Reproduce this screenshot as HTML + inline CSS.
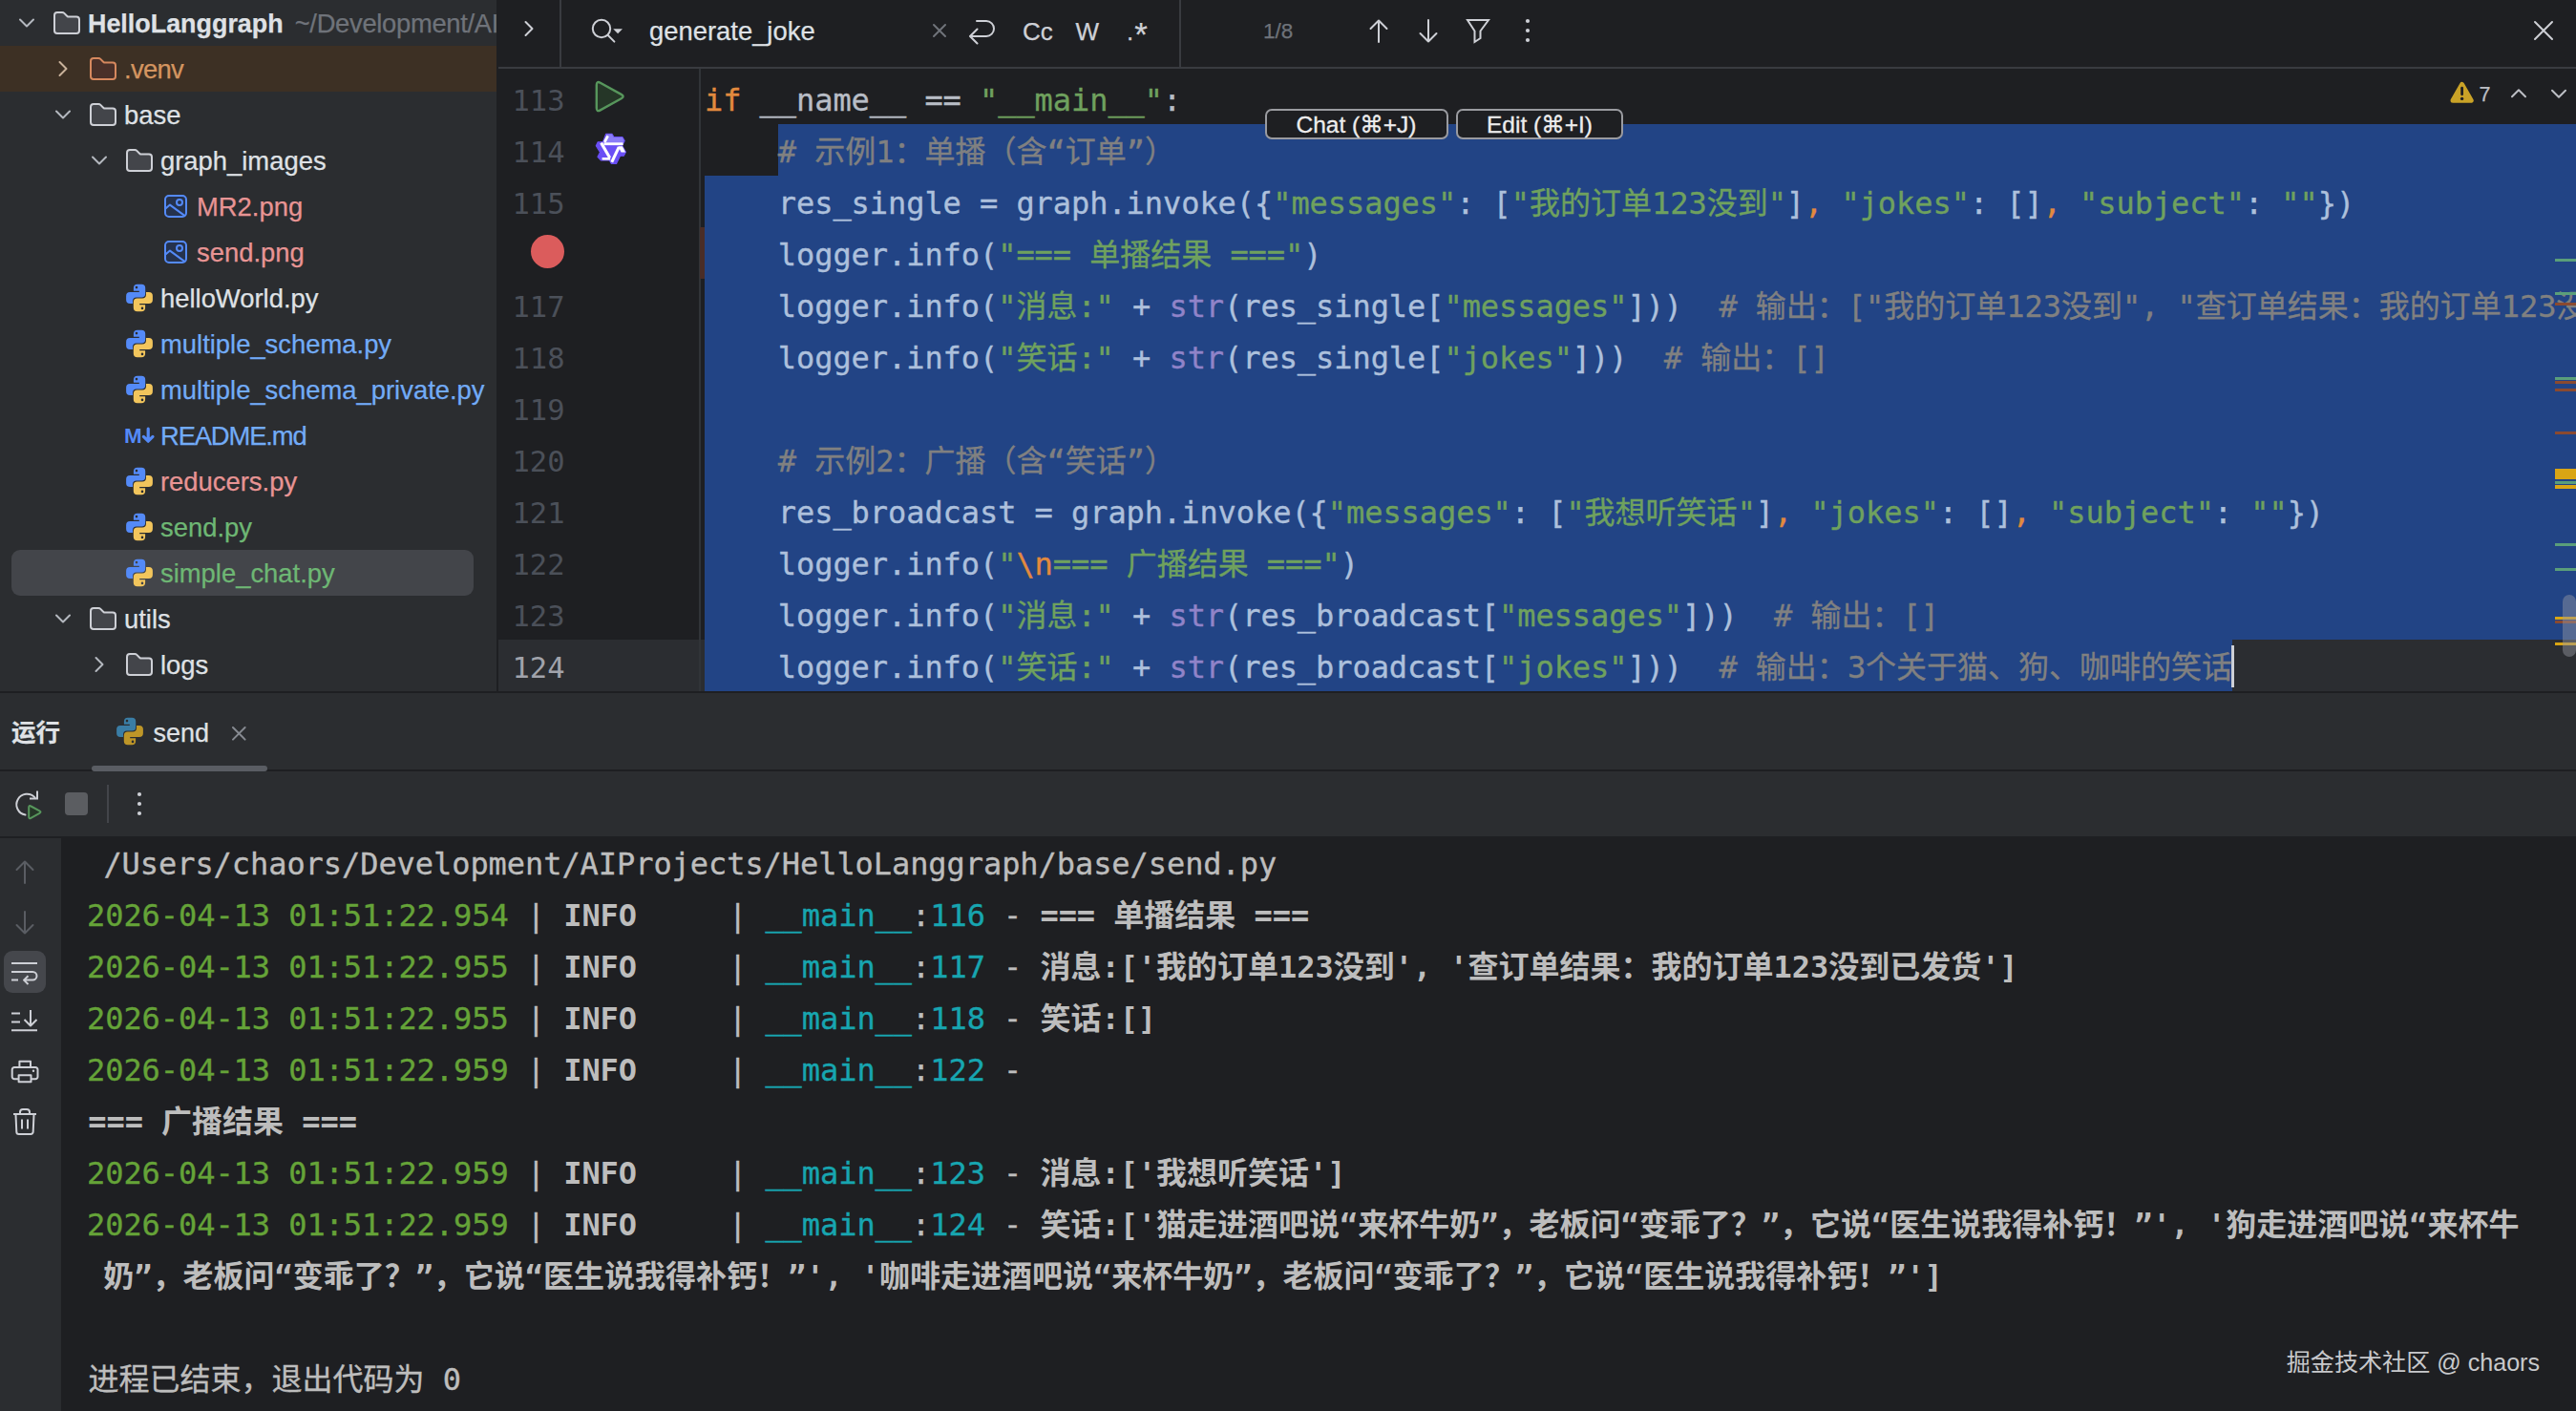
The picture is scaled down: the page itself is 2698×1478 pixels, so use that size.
<!DOCTYPE html>
<html lang="zh-CN"><head><meta charset="utf-8"><title>HelloLanggraph – send.py</title><style>
*{box-sizing:border-box}
html,body{margin:0;padding:0}
body{width:2698px;height:1478px;overflow:hidden;background:#2b2d30;position:relative;font-family:"Liberation Sans","DejaVu Sans","Noto Sans CJK SC",sans-serif;color:#dfe1e5}
.a{position:absolute}
.i{position:absolute;overflow:visible}
.t{position:absolute;white-space:pre;line-height:48px;font-size:27.4px;-webkit-text-stroke:.25px currentColor}
.m{position:absolute;white-space:pre;font-family:"DejaVu Sans Mono","Liberation Mono","Noto Sans CJK SC",monospace;font-size:32px;line-height:54px;color:#b8bdc6;font-variant-ligatures:none;letter-spacing:-0.066px;-webkit-text-stroke:.35px currentColor}
.sel{color:#adc0dc}
.m i{font-style:normal;letter-spacing:0}
.ln{position:absolute;white-space:pre;font-family:"DejaVu Sans Mono","Liberation Mono","Noto Sans CJK SC",monospace;font-size:30.5px;line-height:54px;color:#4b5059;text-align:right;width:90px}
.k{color:#e28a3e}.s{color:#6fa15e}.c{color:#808080}.b{color:#9083c8}
.g{color:#65a338}.cy{color:#17a5b0}.con{color:#bdbdbd}.B{font-weight:bold;-webkit-text-stroke:0}
#sidebar{left:0;top:0;width:520px;height:724px;background:#2b2d30;overflow:hidden}
#editor{left:520px;top:0;width:2178px;height:724px;background:#1e1f22;overflow:hidden}
#run{left:0;top:724px;width:2698px;height:754px;background:#2b2d30;overflow:hidden}
#console{left:64px;top:876px;width:2634px;height:602px;background:#1e1f22;overflow:hidden}
</style></head>
<body>
<div id="sidebar" class="a"><div class="a" style="left:0px;top:48px;width:520px;height:48px;background:#3d3024;"></div><div class="a" style="left:12px;top:576px;width:484px;height:48px;background:#43454a;border-radius:9px"></div><svg class="i" style="left:12px;top:8px" width="32" height="32" viewBox="0 0 16 16" ><path d="M11.5 6.25L8 9.75L4.5 6.25" fill="none" stroke="#b4b8bf" stroke-width="1" stroke-linecap="round" stroke-linejoin="round"/></svg><svg class="i" style="left:54px;top:8px" width="32" height="32" viewBox="0 0 16 16" ><path d="M1.5 4C1.5 3.17 2.17 2.5 3 2.5H5.59C5.98 2.5 6.37 2.66 6.65 2.94L8.06 4.35C8.34 4.63 8.72 4.79 9.12 4.79H13C13.83 4.79 14.5 5.46 14.5 6.29V12C14.5 12.83 13.83 13.5 13 13.5H3C2.17 13.5 1.5 12.83 1.5 12V4Z" fill="#43454a" stroke="#ced0d6" stroke-width="1"/></svg><div class="t" style="left:92px;top:1px;color:#dfe1e5"><b style="font-size:26.9px">HelloLanggraph</b><span style="color:#6f737a;margin-left:12px;letter-spacing:-.32px">~/Development/AIProjects</span></div><svg class="i" style="left:50px;top:56px" width="32" height="32" viewBox="0 0 16 16" ><path d="M6.25 11.5L9.75 8L6.25 4.5" fill="none" stroke="#c9b29b" stroke-width="1" stroke-linecap="round" stroke-linejoin="round"/></svg><svg class="i" style="left:92px;top:56px" width="32" height="32" viewBox="0 0 16 16" ><path d="M1.5 4C1.5 3.17 2.17 2.5 3 2.5H5.59C5.98 2.5 6.37 2.66 6.65 2.94L8.06 4.35C8.34 4.63 8.72 4.79 9.12 4.79H13C13.83 4.79 14.5 5.46 14.5 6.29V12C14.5 12.83 13.83 13.5 13 13.5H3C2.17 13.5 1.5 12.83 1.5 12V4Z" fill="#4a3029" stroke="#d6885e" stroke-width="1"/></svg><div class="t" style="left:130px;top:49px;color:#d49560;letter-spacing:-.7px;">.venv</div><svg class="i" style="left:50px;top:104px" width="32" height="32" viewBox="0 0 16 16" ><path d="M11.5 6.25L8 9.75L4.5 6.25" fill="none" stroke="#b4b8bf" stroke-width="1" stroke-linecap="round" stroke-linejoin="round"/></svg><svg class="i" style="left:92px;top:104px" width="32" height="32" viewBox="0 0 16 16" ><path d="M1.5 4C1.5 3.17 2.17 2.5 3 2.5H5.59C5.98 2.5 6.37 2.66 6.65 2.94L8.06 4.35C8.34 4.63 8.72 4.79 9.12 4.79H13C13.83 4.79 14.5 5.46 14.5 6.29V12C14.5 12.83 13.83 13.5 13 13.5H3C2.17 13.5 1.5 12.83 1.5 12V4Z" fill="#43454a" stroke="#ced0d6" stroke-width="1"/></svg><div class="t" style="left:130px;top:97px;color:#dfe1e5;">base</div><svg class="i" style="left:88px;top:152px" width="32" height="32" viewBox="0 0 16 16" ><path d="M11.5 6.25L8 9.75L4.5 6.25" fill="none" stroke="#b4b8bf" stroke-width="1" stroke-linecap="round" stroke-linejoin="round"/></svg><svg class="i" style="left:130px;top:152px" width="32" height="32" viewBox="0 0 16 16" ><path d="M1.5 4C1.5 3.17 2.17 2.5 3 2.5H5.59C5.98 2.5 6.37 2.66 6.65 2.94L8.06 4.35C8.34 4.63 8.72 4.79 9.12 4.79H13C13.83 4.79 14.5 5.46 14.5 6.29V12C14.5 12.83 13.83 13.5 13 13.5H3C2.17 13.5 1.5 12.83 1.5 12V4Z" fill="#43454a" stroke="#ced0d6" stroke-width="1"/></svg><div class="t" style="left:168px;top:145px;color:#dfe1e5;">graph_images</div><svg class="i" style="left:168px;top:200px" width="32" height="32" viewBox="0 0 16 16" ><rect x="2.5" y="2.5" width="11" height="11" rx="2" fill="#25324d" stroke="#548af7"/><circle cx="10" cy="6" r="1.5" fill="none" stroke="#548af7"/><path d="M2.7 9.2L5 7.3L13 13.2" fill="none" stroke="#548af7" stroke-linejoin="round"/></svg><div class="t" style="left:206px;top:193px;color:#e89494;">MR2.png</div><svg class="i" style="left:168px;top:248px" width="32" height="32" viewBox="0 0 16 16" ><rect x="2.5" y="2.5" width="11" height="11" rx="2" fill="#25324d" stroke="#548af7"/><circle cx="10" cy="6" r="1.5" fill="none" stroke="#548af7"/><path d="M2.7 9.2L5 7.3L13 13.2" fill="none" stroke="#548af7" stroke-linejoin="round"/></svg><div class="t" style="left:206px;top:241px;color:#e89494;">send.png</div><svg class="i" style="left:130px;top:296px" width="32" height="32" viewBox="0 0 16 16" ><g opacity="1"><path d="M6.95 .9H9.1Q11.1 .9 11.1 2.9V5.8Q11.1 7.8 9.1 7.8H6.5Q4.5 7.8 4.5 9.8V11.05H3.05Q1.05 11.05 1.05 9.05V6.95Q1.05 4.95 3.05 4.95H7.9V4.4H4.95V2.9Q4.95 .9 6.95 .9ZM6.5 1.9A.65.65 0 1 1 6.5 3.2A.65.65 0 1 1 6.5 1.9Z" fill="#548af7" fill-rule="evenodd"/><path d="M6.95 .9H9.1Q11.1 .9 11.1 2.9V5.8Q11.1 7.8 9.1 7.8H6.5Q4.5 7.8 4.5 9.8V11.05H3.05Q1.05 11.05 1.05 9.05V6.95Q1.05 4.95 3.05 4.95H7.9V4.4H4.95V2.9Q4.95 .9 6.95 .9ZM6.5 1.9A.65.65 0 1 1 6.5 3.2A.65.65 0 1 1 6.5 1.9Z" fill="#f2c55c" fill-rule="evenodd" transform="rotate(180 8 8)"/></g></svg><div class="t" style="left:168px;top:289px;color:#dfe1e5;">helloWorld.py</div><svg class="i" style="left:130px;top:344px" width="32" height="32" viewBox="0 0 16 16" ><g opacity="1"><path d="M6.95 .9H9.1Q11.1 .9 11.1 2.9V5.8Q11.1 7.8 9.1 7.8H6.5Q4.5 7.8 4.5 9.8V11.05H3.05Q1.05 11.05 1.05 9.05V6.95Q1.05 4.95 3.05 4.95H7.9V4.4H4.95V2.9Q4.95 .9 6.95 .9ZM6.5 1.9A.65.65 0 1 1 6.5 3.2A.65.65 0 1 1 6.5 1.9Z" fill="#548af7" fill-rule="evenodd"/><path d="M6.95 .9H9.1Q11.1 .9 11.1 2.9V5.8Q11.1 7.8 9.1 7.8H6.5Q4.5 7.8 4.5 9.8V11.05H3.05Q1.05 11.05 1.05 9.05V6.95Q1.05 4.95 3.05 4.95H7.9V4.4H4.95V2.9Q4.95 .9 6.95 .9ZM6.5 1.9A.65.65 0 1 1 6.5 3.2A.65.65 0 1 1 6.5 1.9Z" fill="#f2c55c" fill-rule="evenodd" transform="rotate(180 8 8)"/></g></svg><div class="t" style="left:168px;top:337px;color:#72abf7;">multiple_schema.py</div><svg class="i" style="left:130px;top:392px" width="32" height="32" viewBox="0 0 16 16" ><g opacity="1"><path d="M6.95 .9H9.1Q11.1 .9 11.1 2.9V5.8Q11.1 7.8 9.1 7.8H6.5Q4.5 7.8 4.5 9.8V11.05H3.05Q1.05 11.05 1.05 9.05V6.95Q1.05 4.95 3.05 4.95H7.9V4.4H4.95V2.9Q4.95 .9 6.95 .9ZM6.5 1.9A.65.65 0 1 1 6.5 3.2A.65.65 0 1 1 6.5 1.9Z" fill="#548af7" fill-rule="evenodd"/><path d="M6.95 .9H9.1Q11.1 .9 11.1 2.9V5.8Q11.1 7.8 9.1 7.8H6.5Q4.5 7.8 4.5 9.8V11.05H3.05Q1.05 11.05 1.05 9.05V6.95Q1.05 4.95 3.05 4.95H7.9V4.4H4.95V2.9Q4.95 .9 6.95 .9ZM6.5 1.9A.65.65 0 1 1 6.5 3.2A.65.65 0 1 1 6.5 1.9Z" fill="#f2c55c" fill-rule="evenodd" transform="rotate(180 8 8)"/></g></svg><div class="t" style="left:168px;top:385px;color:#72abf7;">multiple_schema_private.py</div><svg class="i" style="left:130px;top:440px" width="32" height="32" viewBox="0 0 16 16" ><text x="0" y="11.9" font-family="Liberation Sans, sans-serif" font-weight="bold" font-size="11.2" fill="#548af7">M</text><path d="M12.6 4.6V10.9M10.2 8.7L12.6 11.1L15 8.7" fill="none" stroke="#548af7" stroke-width="1.6" stroke-linecap="round" stroke-linejoin="round"/></svg><div class="t" style="left:168px;top:433px;color:#72abf7;letter-spacing:-1.15px;">README.md</div><svg class="i" style="left:130px;top:488px" width="32" height="32" viewBox="0 0 16 16" ><g opacity="1"><path d="M6.95 .9H9.1Q11.1 .9 11.1 2.9V5.8Q11.1 7.8 9.1 7.8H6.5Q4.5 7.8 4.5 9.8V11.05H3.05Q1.05 11.05 1.05 9.05V6.95Q1.05 4.95 3.05 4.95H7.9V4.4H4.95V2.9Q4.95 .9 6.95 .9ZM6.5 1.9A.65.65 0 1 1 6.5 3.2A.65.65 0 1 1 6.5 1.9Z" fill="#548af7" fill-rule="evenodd"/><path d="M6.95 .9H9.1Q11.1 .9 11.1 2.9V5.8Q11.1 7.8 9.1 7.8H6.5Q4.5 7.8 4.5 9.8V11.05H3.05Q1.05 11.05 1.05 9.05V6.95Q1.05 4.95 3.05 4.95H7.9V4.4H4.95V2.9Q4.95 .9 6.95 .9ZM6.5 1.9A.65.65 0 1 1 6.5 3.2A.65.65 0 1 1 6.5 1.9Z" fill="#f2c55c" fill-rule="evenodd" transform="rotate(180 8 8)"/></g></svg><div class="t" style="left:168px;top:481px;color:#e89494;">reducers.py</div><svg class="i" style="left:130px;top:536px" width="32" height="32" viewBox="0 0 16 16" ><g opacity="1"><path d="M6.95 .9H9.1Q11.1 .9 11.1 2.9V5.8Q11.1 7.8 9.1 7.8H6.5Q4.5 7.8 4.5 9.8V11.05H3.05Q1.05 11.05 1.05 9.05V6.95Q1.05 4.95 3.05 4.95H7.9V4.4H4.95V2.9Q4.95 .9 6.95 .9ZM6.5 1.9A.65.65 0 1 1 6.5 3.2A.65.65 0 1 1 6.5 1.9Z" fill="#548af7" fill-rule="evenodd"/><path d="M6.95 .9H9.1Q11.1 .9 11.1 2.9V5.8Q11.1 7.8 9.1 7.8H6.5Q4.5 7.8 4.5 9.8V11.05H3.05Q1.05 11.05 1.05 9.05V6.95Q1.05 4.95 3.05 4.95H7.9V4.4H4.95V2.9Q4.95 .9 6.95 .9ZM6.5 1.9A.65.65 0 1 1 6.5 3.2A.65.65 0 1 1 6.5 1.9Z" fill="#f2c55c" fill-rule="evenodd" transform="rotate(180 8 8)"/></g></svg><div class="t" style="left:168px;top:529px;color:#6eb774;">send.py</div><svg class="i" style="left:130px;top:584px" width="32" height="32" viewBox="0 0 16 16" ><g opacity="1"><path d="M6.95 .9H9.1Q11.1 .9 11.1 2.9V5.8Q11.1 7.8 9.1 7.8H6.5Q4.5 7.8 4.5 9.8V11.05H3.05Q1.05 11.05 1.05 9.05V6.95Q1.05 4.95 3.05 4.95H7.9V4.4H4.95V2.9Q4.95 .9 6.95 .9ZM6.5 1.9A.65.65 0 1 1 6.5 3.2A.65.65 0 1 1 6.5 1.9Z" fill="#548af7" fill-rule="evenodd"/><path d="M6.95 .9H9.1Q11.1 .9 11.1 2.9V5.8Q11.1 7.8 9.1 7.8H6.5Q4.5 7.8 4.5 9.8V11.05H3.05Q1.05 11.05 1.05 9.05V6.95Q1.05 4.95 3.05 4.95H7.9V4.4H4.95V2.9Q4.95 .9 6.95 .9ZM6.5 1.9A.65.65 0 1 1 6.5 3.2A.65.65 0 1 1 6.5 1.9Z" fill="#f2c55c" fill-rule="evenodd" transform="rotate(180 8 8)"/></g></svg><div class="t" style="left:168px;top:577px;color:#6eb774;">simple_chat.py</div><svg class="i" style="left:50px;top:632px" width="32" height="32" viewBox="0 0 16 16" ><path d="M11.5 6.25L8 9.75L4.5 6.25" fill="none" stroke="#b4b8bf" stroke-width="1" stroke-linecap="round" stroke-linejoin="round"/></svg><svg class="i" style="left:92px;top:632px" width="32" height="32" viewBox="0 0 16 16" ><path d="M1.5 4C1.5 3.17 2.17 2.5 3 2.5H5.59C5.98 2.5 6.37 2.66 6.65 2.94L8.06 4.35C8.34 4.63 8.72 4.79 9.12 4.79H13C13.83 4.79 14.5 5.46 14.5 6.29V12C14.5 12.83 13.83 13.5 13 13.5H3C2.17 13.5 1.5 12.83 1.5 12V4Z" fill="#43454a" stroke="#ced0d6" stroke-width="1"/></svg><div class="t" style="left:130px;top:625px;color:#dfe1e5;">utils</div><svg class="i" style="left:88px;top:680px" width="32" height="32" viewBox="0 0 16 16" ><path d="M6.25 11.5L9.75 8L6.25 4.5" fill="none" stroke="#b4b8bf" stroke-width="1" stroke-linecap="round" stroke-linejoin="round"/></svg><svg class="i" style="left:130px;top:680px" width="32" height="32" viewBox="0 0 16 16" ><path d="M1.5 4C1.5 3.17 2.17 2.5 3 2.5H5.59C5.98 2.5 6.37 2.66 6.65 2.94L8.06 4.35C8.34 4.63 8.72 4.79 9.12 4.79H13C13.83 4.79 14.5 5.46 14.5 6.29V12C14.5 12.83 13.83 13.5 13 13.5H3C2.17 13.5 1.5 12.83 1.5 12V4Z" fill="#43454a" stroke="#ced0d6" stroke-width="1"/></svg><div class="t" style="left:168px;top:673px;color:#dfe1e5;">logs</div></div>
<div id="editor" class="a"><div class="a" style="left:2px;top:70px;width:2176px;height:2px;background:#393b40;"></div><div class="a" style="left:66px;top:0px;width:2px;height:71px;background:#393b40;"></div><div class="a" style="left:715px;top:0px;width:2px;height:71px;background:#393b40;"></div><svg class="i" style="left:18px;top:14px" width="32" height="32" viewBox="0 0 16 16" ><path d="M6.25 11.5L9.75 8L6.25 4.5" fill="none" stroke="#ced0d6" stroke-width="1" stroke-linecap="round" stroke-linejoin="round"/></svg><svg class="i" style="left:94px;top:15px" width="44" height="34" viewBox="0 0 44 34"><circle cx="16" cy="15" r="9.2" fill="none" stroke="#ced0d6" stroke-width="2"/><path d="M22.6 21.8L29.4 28.6" fill="none" stroke="#ced0d6" stroke-width="2" stroke-linecap="round" stroke-linejoin="round"/><path d="M28.2 15.2H38L33.1 20.2Z" fill="#ced0d6"/></svg><div class="t" style="left:160px;top:9px;color:#dfe1e5">generate_joke</div><svg class="i" style="left:456px;top:24px" width="16" height="16" viewBox="0 0 16 16"><path d="M2 2L14 14M14 2L2 14" fill="none" stroke="#6f737a" stroke-width="2" stroke-linecap="round" stroke-linejoin="round"/></svg><svg class="i" style="left:493.5px;top:20px" width="30" height="28" viewBox="0 0 30 28"><path d="M9 2H19A8 8 0 0 1 19 18H2.5M9.5 10.5L2 18L9.5 25.5" fill="none" stroke="#ced0d6" stroke-width="2" stroke-linecap="round" stroke-linejoin="round"/></svg><div class="t" style="left:551px;top:9px;font-size:26px;color:#ced0d6">Cc</div><div class="t" style="left:606.5px;top:9px;font-size:26px;color:#ced0d6">W</div><div class="t" style="left:660px;top:9px;font-size:26px;color:#ced0d6">.<span style="position:relative;top:6px;font-size:35px;line-height:0;margin-left:1px">*</span></div><div class="t" style="left:803px;top:9px;font-size:22.5px;color:#6f737a">1/8</div><svg class="i" style="left:913px;top:19.5px" width="22" height="26" viewBox="0 0 22 26"><path d="M11 1.5V24M2.5 10L11 1.5L19.5 10" fill="none" stroke="#ced0d6" stroke-width="2" stroke-linecap="round" stroke-linejoin="round"/></svg><svg class="i" style="left:965px;top:19.5px" width="22" height="26" viewBox="0 0 22 26"><path d="M11 1V23.5M2.5 15L11 23.5L19.5 15" fill="none" stroke="#ced0d6" stroke-width="2" stroke-linecap="round" stroke-linejoin="round"/></svg><svg class="i" style="left:1015px;top:19px" width="26" height="27" viewBox="0 0 26 27"><path d="M2 2H24L15.5 13.5V21L9.5 25V13.5Z" fill="none" stroke="#ced0d6" stroke-width="2" stroke-linecap="butt" stroke-linejoin="miter"/></svg><svg class="i" style="left:1076px;top:18px" width="8" height="28" viewBox="0 0 8 28"><circle cx="4" cy="4" r="2.1" fill="#ced0d6"/><circle cx="4" cy="14" r="2.1" fill="#ced0d6"/><circle cx="4" cy="24" r="2.1" fill="#ced0d6"/></svg><svg class="i" style="left:2133px;top:21px" width="22" height="22" viewBox="0 0 22 22"><path d="M2 2L20 20M20 2L2 20" fill="none" stroke="#ced0d6" stroke-width="2" stroke-linecap="round" stroke-linejoin="round"/></svg><div class="a" style="left:1.5px;top:670px;width:216.5px;height:54px;background:#2b2d31;"></div><div class="a" style="left:212.3px;top:72px;width:2px;height:652px;background:#313438;"></div><div class="a" style="left:213px;top:238px;width:5px;height:54px;background:#4a2d27;"></div><div class="a" style="left:294.8px;top:130px;width:1883.2px;height:54px;background:#224485;"></div><div class="a" style="left:218px;top:184px;width:1960px;height:486px;background:#224485;"></div><div class="a" style="left:218px;top:670px;width:1600px;height:54px;background:#224485;"></div><div class="a" style="left:1818px;top:670px;width:360px;height:54px;background:#2b2d31;"></div><div class="a" style="left:1817px;top:676px;width:3px;height:44px;background:#ced0d6;"></div><div class="ln" style="left:-18.5px;top:78.9px;color:#4b5059">113</div><div class="ln" style="left:-18.5px;top:132.9px;color:#4b5059">114</div><div class="ln" style="left:-18.5px;top:186.9px;color:#4b5059">115</div><div class="ln" style="left:-18.5px;top:294.9px;color:#4b5059">117</div><div class="ln" style="left:-18.5px;top:348.9px;color:#4b5059">118</div><div class="ln" style="left:-18.5px;top:402.9px;color:#4b5059">119</div><div class="ln" style="left:-18.5px;top:456.9px;color:#4b5059">120</div><div class="ln" style="left:-18.5px;top:510.9px;color:#4b5059">121</div><div class="ln" style="left:-18.5px;top:564.9px;color:#4b5059">122</div><div class="ln" style="left:-18.5px;top:618.9px;color:#4b5059">123</div><div class="ln" style="left:-18.5px;top:672.9px;color:#a1a3ab">124</div><svg class="i" style="left:102.3px;top:83.3px" width="36" height="37" viewBox="0 0 36 37"><path d="M6.74 3.78Q2.80 1.60 2.80 6.10L2.80 30.10Q2.80 34.60 6.74 32.42L28.66 20.28Q32.60 18.10 28.66 15.92Z" fill="#253627" stroke="#57965c" stroke-width="2.4" stroke-linejoin="round"/></svg><svg class="i" style="left:100px;top:136px" width="40" height="40" viewBox="0 0 40 40"><polygon points="14.7,4.3 21,4.3 23,7.7 32,7.7 34.2,11.5 31.5,16.5 35.4,23.2 33.3,27.2 29.5,27.2 25.5,35.4 20.4,35.4 18.4,32 9.6,32 6,28.3 8.5,23.5 4.3,16.7 6.2,12.8 11.5,12.8" fill="#6a4ff5" stroke="#6a4ff5" stroke-width="1.2" stroke-linejoin="round"/><polygon points="15.2,4.6 20.8,4.6 22.8,8 31.8,8 33.6,11.4 32.6,13 13.4,13" fill="#8a7cf7"/><path d="M16.6 6.4L13.2 12.9" stroke="#fff" stroke-width="2.9"/><path d="M12.4 14.7H32.6" stroke="#fff" stroke-width="2.9"/><path d="M9.6 13.6L18.7 29.2" stroke="#fff" stroke-width="3.1"/><path d="M19.2 30.3H10.6" stroke="#fff" stroke-width="2.6"/><path d="M28.2 18.2L20.7 33.8" stroke="#fff" stroke-width="3.1"/><polygon points="27.4,17.3 31.9,17.3 35.1,23.4 30.6,23.4" fill="#fff"/></svg><div class="a" style="left:36px;top:246px;width:35px;height:35px;border-radius:50%;background:#db5c5c"></div><div class="m" style="left:218px;top:77.7px"><span class="k">if</span> __name__ == <span class="s">"__main__"</span>:</div><div class="m sel" style="left:218px;top:131.7px">    <span class="c"># <i>示例</i>1<i>：单播（含</i>“<i>订单</i>”<i>）</i></span></div><div class="m sel" style="left:218px;top:185.7px">    res_single = graph.invoke({<span class="s">"messages"</span>: [<span class="s">"<i>我的订单</i>123<i>没到</i>"</span>]<span class="k">,</span> <span class="s">"jokes"</span>: []<span class="k">,</span> <span class="s">"subject"</span>: <span class="s">""</span>})</div><div class="m sel" style="left:218px;top:239.7px">    logger.info(<span class="s">"=== <i>单播结果</i> ==="</span>)</div><div class="m sel" style="left:218px;top:293.7px">    logger.info(<span class="s">"<i>消息</i>:"</span> + <span class="b">str</span>(res_single[<span class="s">"messages"</span>]))  <span class="c"># <i>输出：</i>["<i>我的订单</i>123<i>没到</i>", "<i>查订单结果：我的订单</i>123<i>没到已发货</i>"]</span></div><div class="m sel" style="left:218px;top:347.7px">    logger.info(<span class="s">"<i>笑话</i>:"</span> + <span class="b">str</span>(res_single[<span class="s">"jokes"</span>]))  <span class="c"># <i>输出：</i>[]</span></div><div class="m sel" style="left:218px;top:455.7px">    <span class="c"># <i>示例</i>2<i>：广播（含</i>“<i>笑话</i>”<i>）</i></span></div><div class="m sel" style="left:218px;top:509.7px">    res_broadcast = graph.invoke({<span class="s">"messages"</span>: [<span class="s">"<i>我想听笑话</i>"</span>]<span class="k">,</span> <span class="s">"jokes"</span>: []<span class="k">,</span> <span class="s">"subject"</span>: <span class="s">""</span>})</div><div class="m sel" style="left:218px;top:563.7px">    logger.info(<span class="s">"</span><span class="k">\n</span><span class="s">=== <i>广播结果</i> ==="</span>)</div><div class="m sel" style="left:218px;top:617.7px">    logger.info(<span class="s">"<i>消息</i>:"</span> + <span class="b">str</span>(res_broadcast[<span class="s">"messages"</span>]))  <span class="c"># <i>输出：</i>[]</span></div><div class="m sel" style="left:218px;top:671.7px">    logger.info(<span class="s">"<i>笑话</i>:"</span> + <span class="b">str</span>(res_broadcast[<span class="s">"jokes"</span>]))  <span class="c"># <i>输出：</i>3<i>个关于猫、狗、咖啡的笑话</i></span></div><div class="a" style="left:804.5px;top:114px;width:192px;height:32px;border:2px solid #9a9ba0;border-radius:7px;background:#1e1f22;color:#ededed;-webkit-text-stroke:.3px #ededed;font-size:24.5px;line-height:30px;text-align:center;white-space:pre;font-family:"Liberation Sans","DejaVu Sans",sans-serif">Chat (⌘+J)</div><div class="a" style="left:1005px;top:114px;width:175px;height:32px;border:2px solid #9a9ba0;border-radius:7px;background:#1e1f22;color:#ededed;-webkit-text-stroke:.3px #ededed;font-size:24.5px;line-height:30px;text-align:center;white-space:pre;font-family:"Liberation Sans","DejaVu Sans",sans-serif">Edit (⌘+I)</div><svg class="i" style="left:2044.5px;top:85px" width="28" height="25" viewBox="0 0 28 25"><path d="M13.6 3.4L23.2 20.3H4Z" fill="#c9a227" stroke="#c9a227" stroke-width="5" stroke-linejoin="round"/><path d="M13.6 7.2V13.8" stroke="#1e1f22" stroke-width="2.8" stroke-linecap="round"/><circle cx="13.6" cy="18.4" r="1.7" fill="#1e1f22"/></svg><div class="t" style="left:2076.5px;top:74.5px;font-size:21.5px;color:#bcbec4">7</div><svg class="i" style="left:2108px;top:91px" width="20" height="14" viewBox="0 0 20 14"><path d="M3 10.3L10 3.3L17 10.3" fill="none" stroke="#bcbec4" stroke-width="2" stroke-linecap="round" stroke-linejoin="round"/></svg><svg class="i" style="left:2150px;top:91px" width="20" height="14" viewBox="0 0 20 14"><path d="M3 3.7L10 10.7L17 3.7" fill="none" stroke="#bcbec4" stroke-width="2" stroke-linecap="round" stroke-linejoin="round"/></svg><div class="a" style="left:2156px;top:271px;width:22px;height:3px;background:#5a9e7a;"></div><div class="a" style="left:2156px;top:306px;width:22px;height:3px;background:#5a9e7a;"></div><div class="a" style="left:2156px;top:317px;width:22px;height:3px;background:#8a4a30;"></div><div class="a" style="left:2156px;top:394.5px;width:22px;height:3px;background:#5a9e7a;"></div><div class="a" style="left:2156px;top:398.5px;width:22px;height:3px;background:#8a4a30;"></div><div class="a" style="left:2156px;top:406.5px;width:22px;height:3px;background:#8a4a30;"></div><div class="a" style="left:2156px;top:452px;width:22px;height:3px;background:#8a4a30;"></div><div class="a" style="left:2156px;top:490.5px;width:22px;height:11.5px;background:#d9a514;"></div><div class="a" style="left:2156px;top:503.5px;width:22px;height:3px;background:#5a9e7a;"></div><div class="a" style="left:2156px;top:508px;width:22px;height:4px;background:#d9a514;"></div><div class="a" style="left:2156px;top:568.5px;width:22px;height:3px;background:#5a9e7a;"></div><div class="a" style="left:2156px;top:594.5px;width:22px;height:3px;background:#5a9e7a;"></div><div class="a" style="left:2156px;top:646px;width:22px;height:3px;background:#d9a514;"></div><div class="a" style="left:2156px;top:650px;width:22px;height:3px;background:#8a4a30;"></div><div class="a" style="left:2156px;top:672.5px;width:22px;height:3.5px;background:#d9a514;"></div><div class="a" style="left:2164px;top:623px;width:14px;height:65px;background:rgba(150,154,162,.45);border-radius:7px"></div></div>
<div id="run" class="a"><div class="a" style="left:0;top:-724px;width:2698px;height:1478px"><div id="console" class="a"></div><div class="a" style="left:0px;top:724px;width:2698px;height:2px;background:#1e1f22;"></div><div class="a" style="left:0px;top:806px;width:2698px;height:2px;background:#1e1f22;"></div><div class="a" style="left:96px;top:802px;width:184px;height:6px;background:#5a5d63;border-radius:3px"></div><div class="t" style="left:12px;top:743px;font-size:25.5px;font-weight:bold;color:#dfe1e5">运行</div><svg class="i" style="left:120px;top:750px" width="32" height="32" viewBox="0 0 16 16" ><g opacity="1"><path d="M6.95 .9H9.1Q11.1 .9 11.1 2.9V5.8Q11.1 7.8 9.1 7.8H6.5Q4.5 7.8 4.5 9.8V11.05H3.05Q1.05 11.05 1.05 9.05V6.95Q1.05 4.95 3.05 4.95H7.9V4.4H4.95V2.9Q4.95 .9 6.95 .9ZM6.5 1.9A.65.65 0 1 1 6.5 3.2A.65.65 0 1 1 6.5 1.9Z" fill="#3a7da5" fill-rule="evenodd"/><path d="M6.95 .9H9.1Q11.1 .9 11.1 2.9V5.8Q11.1 7.8 9.1 7.8H6.5Q4.5 7.8 4.5 9.8V11.05H3.05Q1.05 11.05 1.05 9.05V6.95Q1.05 4.95 3.05 4.95H7.9V4.4H4.95V2.9Q4.95 .9 6.95 .9ZM6.5 1.9A.65.65 0 1 1 6.5 3.2A.65.65 0 1 1 6.5 1.9Z" fill="#be9628" fill-rule="evenodd" transform="rotate(180 8 8)"/></g></svg><div class="t" style="left:160.5px;top:743.5px;font-size:27px;color:#dfe1e5">send</div><svg class="i" style="left:241.7px;top:759.7px" width="16.6" height="16.6" viewBox="0 0 16.6 16.6"><path d="M2 2L14.6 14.6M14.6 2L2 14.6" fill="none" stroke="#868a91" stroke-width="2" stroke-linecap="round" stroke-linejoin="round"/></svg><svg class="i" style="left:13.5px;top:826.5px" width="32" height="34" viewBox="0 0 32 34"><path d="M12.5 26.6A11 11 0 1 1 22.5 8.4" fill="none" stroke="#ced0d6" stroke-width="2" stroke-linecap="round" stroke-linejoin="round"/><path d="M25 1.5V9.5H17" fill="none" stroke="#ced0d6" stroke-width="2" stroke-linecap="butt" stroke-linejoin="miter"/><path d="M18.40 17.50Q16.20 16.30 16.20 18.80L16.20 28.50Q16.20 31.00 18.39 29.79L27.41 24.81Q29.60 23.60 27.40 22.40Z" fill="#253627" stroke="#57965c" stroke-width="2" stroke-linejoin="round"/></svg><div class="a" style="left:68px;top:830px;width:24px;height:24px;background:#5b5d61;border-radius:4px"></div><div class="a" style="left:112px;top:822px;width:2px;height:40px;background:#43454a;"></div><svg class="i" style="left:142px;top:828px" width="8" height="28" viewBox="0 0 8 28"><circle cx="4" cy="4" r="2.1" fill="#ced0d6"/><circle cx="4" cy="14" r="2.1" fill="#ced0d6"/><circle cx="4" cy="24" r="2.1" fill="#ced0d6"/></svg><div class="a" style="left:0px;top:876px;width:64px;height:2px;background:#1e1f22;"></div><svg class="i" style="left:15px;top:901px" width="22" height="26" viewBox="0 0 22 26"><path d="M11 1.5V24M2.5 10L11 1.5L19.5 10" fill="none" stroke="#5a5d63" stroke-width="2" stroke-linecap="round" stroke-linejoin="round"/></svg><svg class="i" style="left:15px;top:954px" width="22" height="26" viewBox="0 0 22 26"><path d="M11 1V23.5M2.5 15L11 23.5L19.5 15" fill="none" stroke="#5a5d63" stroke-width="2" stroke-linecap="round" stroke-linejoin="round"/></svg><div class="a" style="left:4px;top:996px;width:44px;height:44px;background:#45474c;border-radius:9px"></div><svg class="i" style="left:10px;top:1006px" width="32" height="26" viewBox="0 0 32 26"><path d="M2 3H29M2 12H24.2A4.3 4.3 0 0 1 24.2 20.6H15.5M2 20.6H9M19.5 16.2L15 20.6L19.5 25" fill="none" stroke="#ced0d6" stroke-width="2" stroke-linecap="butt" stroke-linejoin="round"/></svg><svg class="i" style="left:10px;top:1057px" width="32" height="26" viewBox="0 0 32 26"><path d="M2 4.5H11M2 13.5H11M2 22.3H29M22 1V17M15.5 11L22 17.5L28.5 11" fill="none" stroke="#ced0d6" stroke-width="2" stroke-linecap="butt" stroke-linejoin="round"/></svg><svg class="i" style="left:10px;top:1108.5px" width="32" height="28" viewBox="0 0 32 28"><path d="M10.4 9V2.8H22V9M9.6 21.2H5A2.3 2.3 0 0 1 2.7 18.9V11.4A2.3 2.3 0 0 1 5 9.1H27.2A2.3 2.3 0 0 1 29.5 11.4V18.9A2.3 2.3 0 0 1 27.2 21.2H22.5M9.6 17.3H22.5V24.2H9.6Z" fill="none" stroke="#ced0d6" stroke-width="2" stroke-linecap="butt" stroke-linejoin="round"/><circle cx="25" cy="12.7" r="1.2" fill="#ced0d6"/></svg><svg class="i" style="left:12px;top:1159.5px" width="28" height="30" viewBox="0 0 28 30"><path d="M2 7H26M9 6.5V5A3 3 0 0 1 12 2H16A3 3 0 0 1 19 5V6.5M4.5 7.5L5.3 25.5A2.5 2.5 0 0 0 7.8 28H20.2A2.5 2.5 0 0 0 22.7 25.5L23.5 7.5M11 12.5V22.5M17 12.5V22.5" fill="none" stroke="#ced0d6" stroke-width="2" stroke-linecap="butt" stroke-linejoin="round"/></svg><div class="m con" style="left:108.40px;top:877.5px">/Users/chaors/Development/AIProjects/HelloLanggraph/base/send.py</div><div class="m con" style="left:91.00px;top:931.5px"><span class="g">2026-04-13 01:51:22.954</span> | <span class="B">INFO</span>     | <span class="cy">__main__</span>:<span class="cy">116</span> - <span class="B">=== <i>单播结果</i> ===</span></div><div class="m con" style="left:91.00px;top:985.5px"><span class="g">2026-04-13 01:51:22.955</span> | <span class="B">INFO</span>     | <span class="cy">__main__</span>:<span class="cy">117</span> - <span class="B"><i>消息</i>:['<i>我的订单</i>123<i>没到</i>', '<i>查订单结果：我的订单</i>123<i>没到已发货</i>']</span></div><div class="m con" style="left:91.00px;top:1039.5px"><span class="g">2026-04-13 01:51:22.955</span> | <span class="B">INFO</span>     | <span class="cy">__main__</span>:<span class="cy">118</span> - <span class="B"><i>笑话</i>:[]</span></div><div class="m con" style="left:91.00px;top:1093.5px"><span class="g">2026-04-13 01:51:22.959</span> | <span class="B">INFO</span>     | <span class="cy">__main__</span>:<span class="cy">122</span> - <span class="B"></span></div><div class="m con" style="left:92.30px;top:1147.5px"><span class="B">=== <i>广播结果</i> ===</span></div><div class="m con" style="left:91.00px;top:1201.5px"><span class="g">2026-04-13 01:51:22.959</span> | <span class="B">INFO</span>     | <span class="cy">__main__</span>:<span class="cy">123</span> - <span class="B"><i>消息</i>:['<i>我想听笑话</i>']</span></div><div class="m con" style="left:91.00px;top:1255.5px"><span class="g">2026-04-13 01:51:22.959</span> | <span class="B">INFO</span>     | <span class="cy">__main__</span>:<span class="cy">124</span> - <span class="B"><i>笑话</i>:['<i>猫走进酒吧说</i>“<i>来杯牛奶</i>”<i>，老板问</i>“<i>变乖了？</i>”<i>，它说</i>“<i>医生说我得补钙！</i>”', '<i>狗走进酒吧说</i>“<i>来杯牛</i></span></div><div class="m con" style="left:108.20px;top:1309.5px"><span class="B"><i>奶</i>”<i>，老板问</i>“<i>变乖了？</i>”<i>，它说</i>“<i>医生说我得补钙！</i>”', '<i>咖啡走进酒吧说</i>“<i>来杯牛奶</i>”<i>，老板问</i>“<i>变乖了？</i>”<i>，它说</i>“<i>医生说我得补钙！</i>”']</span></div><div class="m con" style="left:92.50px;top:1417.5px"><i>进程已结束，退出代码为</i> 0</div><div class="a" style="right:38px;top:1409px;font-size:25.1px;line-height:36px;color:#c8c9cc;white-space:pre;font-family:"Liberation Sans","DejaVu Sans","Noto Sans CJK SC",sans-serif">掘金技术社区 @ chaors</div></div></div>
</body></html>
